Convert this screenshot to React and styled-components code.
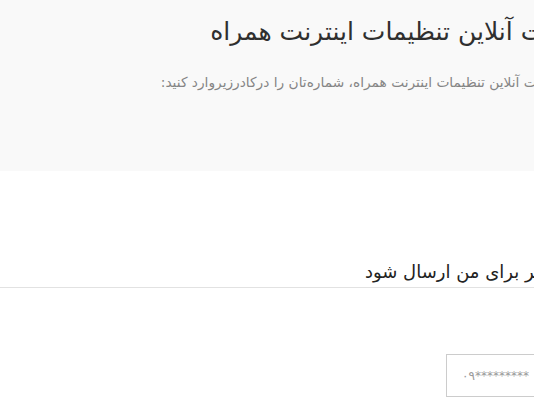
import React from "react";
import styled, { createGlobalStyle } from "styled-components";

const Global = createGlobalStyle`
  html, body {
    margin: 0;
    padding: 0;
    overflow: hidden;
    background: #ffffff;
  }
  body {
    font-family: "DejaVu Sans", "Noto Sans", sans-serif;
  }
`;

const Hero = styled.header`
  background: #f9f9f9;
  height: 171px;
  box-sizing: border-box;
  padding-top: 12px;
`;

const Wrap = styled.div`
  width: 595px;
  direction: rtl;
  text-align: right;
`;

const Title = styled.h1`
  margin: 0;
  font-size: 25px;
  line-height: 40px;
  font-weight: 400;
  color: #2f2f2f;
  white-space: nowrap;
`;

const Lead = styled.p`
  margin: 18px 0 0;
  font-size: 13.75px;
  line-height: 24px;
  color: #858585;
  white-space: nowrap;
`;

const Section = styled.section`
  padding-top: 86px;
`;

const SectionTitle = styled.h2`
  margin: 0;
  font-size: 18px;
  line-height: 30px;
  font-weight: 400;
  color: #222222;
  border-bottom: 1px solid #e2e2e2;
  white-space: nowrap;
`;

const Form = styled.form`
  display: flex;
  justify-content: flex-start;
  margin-top: 66px;
`;

const PhoneInput = styled.input`
  box-sizing: border-box;
  width: 149px;
  height: 43px;
  border: 1px solid #cccccc;
  background: #ffffff;
  padding: 0 15px;
  direction: ltr;
  text-align: left;
  font-family: "DejaVu Sans", sans-serif;
  font-size: 12px;
  color: #555555;
  outline: none;
  &::placeholder {
    color: #9a9a9a;
  }
`;

export default function App() {
  return (
    <>
      <Global />
      <Hero>
        <Wrap>
          <Title>دریافت آنلاین تنظیمات اینترنت همراه</Title>
          <Lead>
            برای دریافت آنلاین تنظیمات اینترنت همراه، شماره‌تان را درکادرزیروارد کنید:
          </Lead>
        </Wrap>
      </Hero>
      <Section>
        <Wrap>
          <SectionTitle>موارد زیر برای من ارسال شود</SectionTitle>
          <Form onSubmit={(e) => e.preventDefault()}>
            <PhoneInput type="tel" placeholder="۰۹*********" />
          </Form>
        </Wrap>
      </Section>
    </>
  );
}
